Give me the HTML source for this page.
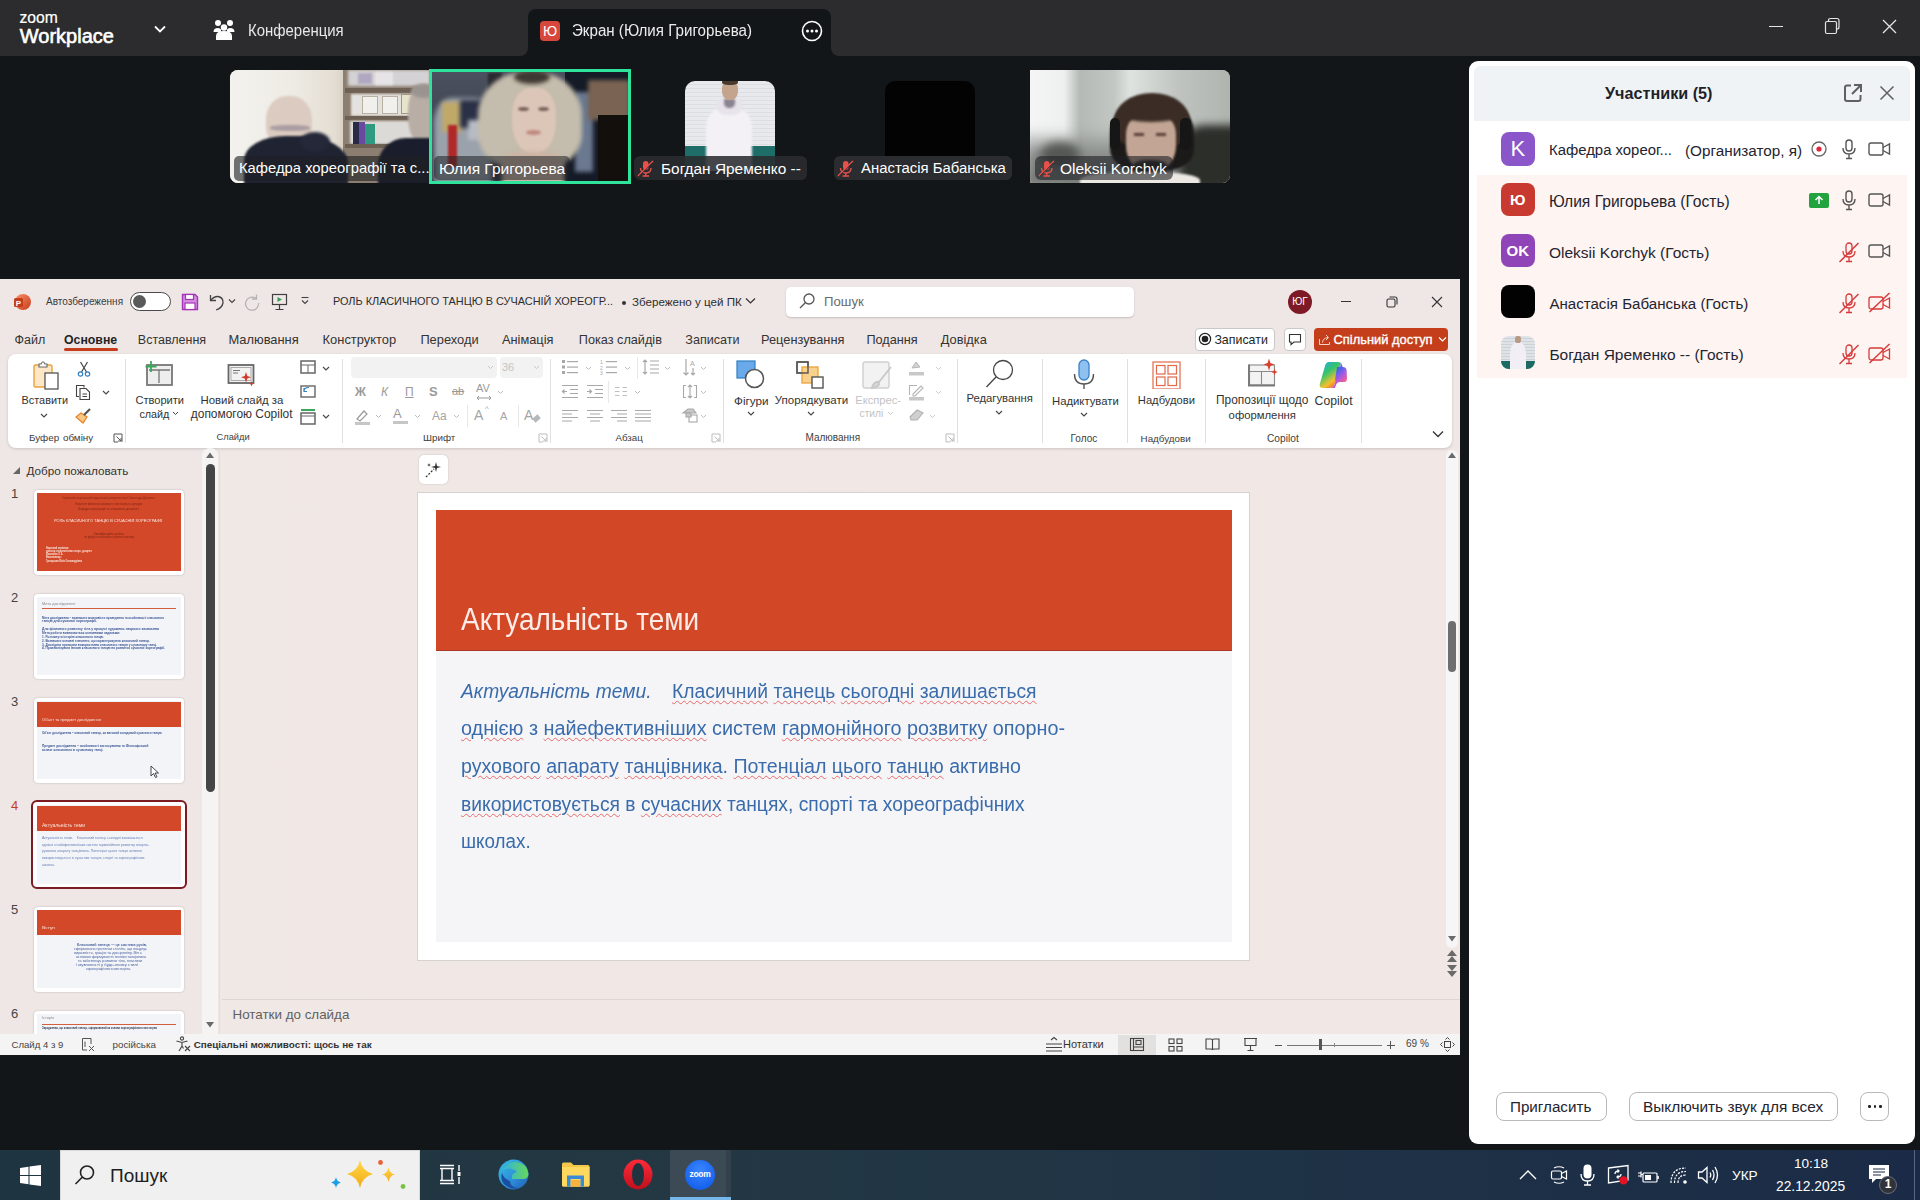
<!DOCTYPE html>
<html><head><meta charset="utf-8">
<style>
*{margin:0;padding:0;box-sizing:border-box}
html,body{width:1920px;height:1200px;overflow:hidden;background:#131619;font-family:"Liberation Sans",sans-serif}
.a{position:absolute}
.t{position:absolute;white-space:nowrap;line-height:1;transform-origin:0 0}
#top{left:0;top:0;width:1920px;height:56px;background:#2c2c2e}
#tab{left:528px;top:9px;width:303px;height:47px;background:#131619;border-radius:8px 8px 0 0}
</style></head><body>
<!-- ZOOM TOP BAR -->
<div id="top" class="a"></div>
<div class="a" style="left:520px;top:48px;width:8px;height:8px;background:#131619"></div>
<div class="a" style="left:520px;top:40px;width:8px;height:16px;background:#2c2c2e;border-radius:0 0 8px 0"></div>
<div class="a" style="left:831px;top:48px;width:8px;height:8px;background:#131619"></div>
<div class="a" style="left:831px;top:40px;width:8px;height:16px;background:#2c2c2e;border-radius:0 0 0 8px"></div>
<div id="tab" class="a"></div>
<div class="t" style="left:19.5px;top:9.5px;font-size:15.7px;color:#fff;-webkit-text-stroke:0.2px #fff">zoom</div>
<div class="t" style="left:19.8px;top:25.7px;font-size:20px;color:#fff;-webkit-text-stroke:0.6px #fff">Workplace</div>
<svg class="a" style="left:153px;top:24px" width="14" height="10" viewBox="0 0 14 10"><path d="M2 2.5 L7 7.5 L12 2.5" stroke="#fff" stroke-width="1.8" fill="none"/></svg>
<svg class="a" style="left:213px;top:19px" width="22" height="22" viewBox="0 0 22 22" fill="#fff"><circle cx="5" cy="4" r="3"/><circle cx="17" cy="4" r="3"/><circle cx="11" cy="8.5" r="3.2"/><path d="M0.5 13 Q0.5 9 5 9 Q7 9 8 10.5 L8 13Z"/><path d="M21.5 13 Q21.5 9 17 9 Q15 9 14 10.5 L14 13Z"/><path d="M3 21 L3 17 Q3 12 11 12 Q19 12 19 17 L19 21 Z"/></svg>
<div class="t" style="left:247.5px;top:23.1px;font-size:15.78px;transform:scaleX(0.947);color:#e8e8e8">Конференция</div>
<div class="a" style="left:540px;top:21px;width:20px;height:20px;background:#d8473b;border-radius:4px;color:#fff;font-size:14px;text-align:center;line-height:20px">Ю</div>
<div class="t" style="left:572px;top:22.5px;font-size:15.6px;transform:scaleX(0.97);color:#ececec">Экран (Юлия Григорьева)</div>
<svg class="a" style="left:801px;top:20px" width="22" height="22" viewBox="0 0 22 22"><circle cx="11" cy="11" r="9.5" stroke="#fff" stroke-width="1.6" fill="none"/><circle cx="6.5" cy="11" r="1.5" fill="#fff"/><circle cx="11" cy="11" r="1.5" fill="#fff"/><circle cx="15.5" cy="11" r="1.5" fill="#fff"/></svg>
<div class="a" style="left:1769px;top:25.5px;width:14px;height:1.3px;background:#e4e4e4"></div>
<svg class="a" style="left:1823px;top:16px" width="20" height="20" viewBox="0 0 20 20" fill="none" stroke="#e4e4e4" stroke-width="1.2"><rect x="2.5" y="5.5" width="11" height="12" rx="1.5"/><path d="M5.5 5.5 V4.5 Q5.5 2.5 7.5 2.5 H14 Q16 2.5 16 4.5 V11 Q16 13 14 13 H13.5"/></svg>
<svg class="a" style="left:1881px;top:18px" width="17" height="17" viewBox="0 0 17 17" stroke="#e4e4e4" stroke-width="1.3"><path d="M2 2 L15 15 M15 2 L2 15"/></svg>

<!-- VIDEO STRIP -->
<div class="a" style="left:230px;top:70px;width:200px;height:113px;overflow:hidden;border-radius:8px 0 0 8px;background:#e6e2da">
  <div class="a" style="left:0;top:0;width:116px;height:113px;background:linear-gradient(90deg,#f3f2ee,#eeebe4 55%,#e4ddd2 90%,#d8cfc2)"></div>
  <div class="a" style="left:113px;top:0;width:87px;height:113px;background:#8c7e70"></div>
  <div class="a" style="left:118px;top:0;width:82px;height:16px;background:#d4d2d4;filter:blur(1.5px)"></div>
  <div class="a" style="left:128px;top:3px;width:14px;height:11px;background:#b0a8c0;filter:blur(1px)"></div>
  <div class="a" style="left:145px;top:2px;width:18px;height:13px;background:#e6e4e6;filter:blur(1px)"></div>
  <div class="a" style="left:115px;top:18px;width:85px;height:5px;background:#6e6052;filter:blur(.5px)"></div>
  <div class="a" style="left:121px;top:24px;width:79px;height:22px;background:#e4e2de;filter:blur(1px)"></div>
  <div class="a" style="left:132px;top:26px;width:16px;height:18px;background:#f2f0ec;border:1px solid #b8b0a0;filter:blur(.6px)"></div>
  <div class="a" style="left:152px;top:26px;width:16px;height:18px;background:#f2f0ec;border:1px solid #b8b0a0;filter:blur(.6px)"></div>
  <div class="a" style="left:171px;top:24px;width:16px;height:20px;background:#e8e4cc;border:1px solid #a09880;filter:blur(.6px)"></div>
  <div class="a" style="left:115px;top:46px;width:85px;height:4px;background:#6e6052;filter:blur(.5px)"></div>
  <div class="a" style="left:120px;top:51px;width:80px;height:23px;background:#dcdad6;filter:blur(1px)"></div>
  <div class="a" style="left:123px;top:52px;width:6px;height:22px;background:#2a2a48;filter:blur(.6px)"></div>
  <div class="a" style="left:129px;top:52px;width:6px;height:22px;background:#6a4aa0;filter:blur(.6px)"></div>
  <div class="a" style="left:135px;top:54px;width:10px;height:20px;background:#2e9a80;filter:blur(.6px)"></div>
  <div class="a" style="left:115px;top:74px;width:85px;height:4px;background:#6e6052;filter:blur(.5px)"></div>
  <div class="a" style="left:36px;top:26px;width:46px;height:52px;background:#dccbc0;border-radius:45% 45% 42% 42%;filter:blur(1.2px)"></div>
  <div class="a" style="left:40px;top:55px;width:40px;height:6px;background:#8a8090;border-radius:40%;filter:blur(1px);opacity:.6"></div>
  <div class="a" style="left:14px;top:66px;width:104px;height:60px;background:#1f2332;border-radius:40% 45% 0 0;filter:blur(1.2px)"></div>
  <div class="a" style="left:70px;top:62px;width:30px;height:20px;background:#242838;border-radius:50%;filter:blur(1.5px)"></div>
  <div class="a" style="left:178px;top:14px;width:30px;height:60px;background:#b8aea6;border-radius:45%;filter:blur(1.2px)"></div>
  <div class="a" style="left:181px;top:14px;width:26px;height:14px;background:#9a9490;border-radius:50%;filter:blur(1.5px)"></div>
  <div class="a" style="left:148px;top:68px;width:62px;height:60px;background:#1a1e2c;border-radius:45% 0 0 0;filter:blur(1.2px)"></div>
</div>
<div class="a" style="left:430px;top:70px;width:200px;height:113px;overflow:hidden;background:#1b222e">
  <div class="a" style="left:0;top:0;width:150px;height:113px;background:linear-gradient(180deg,#4b515e,#3d4452 60%,#2c3340)"></div>
  <div class="a" style="left:58px;top:3px;width:14px;height:18px;background:#2a2a30;filter:blur(1px)"></div>
  <div class="a" style="left:135px;top:0;width:65px;height:113px;background:#141a26"></div>
  <div class="a" style="left:145px;top:22px;width:18px;height:80px;background:#6a7890;filter:blur(2px)"></div>
  <div class="a" style="left:158px;top:10px;width:42px;height:40px;background:#7a6352;filter:blur(2px)"></div>
  <div class="a" style="left:168px;top:45px;width:32px;height:68px;background:#120f0c"></div>
  <div class="a" style="left:4px;top:28px;width:58px;height:85px;background:#9aa2ac;border-radius:30% 30% 0 0;filter:blur(2.5px)"></div>
  <div class="a" style="left:12px;top:32px;width:20px;height:30px;background:#c0a868;filter:blur(2px)"></div>
  <div class="a" style="left:18px;top:55px;width:9px;height:42px;background:#b02828;filter:blur(1px)"></div>
  <div class="a" style="left:30px;top:30px;width:28px;height:28px;background:#2a3045;filter:blur(2px)"></div>
  <div class="a" style="left:38px;top:50px;width:22px;height:20px;background:#b8bcc4;filter:blur(2px)"></div>
  <div class="a" style="left:48px;top:2px;width:104px;height:96px;background:#c4bcac;border-radius:45% 45% 35% 35%;filter:blur(2px)"></div>
  <div class="a" style="left:84px;top:0;width:36px;height:14px;background:#3e3832;border-radius:50%;filter:blur(2px)"></div>
  <div class="a" style="left:82px;top:18px;width:44px;height:66px;background:#dcc6b8;border-radius:40% 40% 48% 48%;filter:blur(1.2px)"></div>
  <div class="a" style="left:88px;top:37px;width:11px;height:4px;background:#7a625a;border-radius:50%;filter:blur(1.2px)"></div>
  <div class="a" style="left:108px;top:37px;width:11px;height:4px;background:#7a625a;border-radius:50%;filter:blur(1.2px)"></div>
  <div class="a" style="left:96px;top:60px;width:15px;height:5px;background:#c08a80;border-radius:50%;filter:blur(.8px)"></div>
  <div class="a" style="left:72px;top:82px;width:62px;height:40px;background:#cdb4a4;border-radius:30% 30% 0 0;filter:blur(2px)"></div>
</div>
<div class="a" style="left:429px;top:69px;width:202px;height:115px;border:3px solid #2fe39c"></div>
<div class="a" style="left:685px;top:81px;width:90px;height:90px;border-radius:10px;overflow:hidden;background:repeating-linear-gradient(180deg,#e8e9ec 0 3px,#dcdee2 3px 4px)">
  <div class="a" style="left:0;top:65px;width:90px;height:25px;background:#1e6d69"></div>
  <div class="a" style="left:21px;top:28px;width:46px;height:65px;background:#f3f1f6;border-radius:30% 30% 0 0;filter:blur(0.8px)"></div><div class="a" style="left:32px;top:16px;width:25px;height:18px;background:#e6e3ea;border-radius:40%;filter:blur(0.8px)"></div><div class="a" style="left:39px;top:18px;width:11px;height:9px;background:#8a8490;border-radius:0 0 50% 50%;filter:blur(0.8px)"></div>
  <div class="a" style="left:37px;top:0px;width:16px;height:19px;background:#c5a48e;border-radius:40% 40% 45% 45%;filter:blur(.7px)"></div>
  <div class="a" style="left:37px;top:-2px;width:16px;height:6px;background:#4a3a2e;border-radius:40%;filter:blur(.7px)"></div>
</div>
<div class="a" style="left:885px;top:81px;width:90px;height:90px;border-radius:10px;background:#030303"></div>
<div class="a" style="left:1030px;top:70px;width:200px;height:113px;overflow:hidden;border-radius:0 8px 8px 0;background:#b9bdb9">
  <div class="a" style="left:0;top:0;width:200px;height:113px;background:linear-gradient(90deg,#f4f5f4 0,#eef0ef 17%,#b4b9b6 25%,#c2c7c3 42%,#dfe3e0 50%,#d2d6d2 60%,#bfc3bf 75%,#b0b4af 100%)"></div>
  <div class="a" style="left:-5px;top:58px;width:210px;height:60px;background:linear-gradient(180deg,rgba(130,135,132,0),#8a8e8b 45%,#707470);filter:blur(4px)"></div>
  <div class="a" style="left:10px;top:72px;width:40px;height:25px;background:#545854;border-radius:50%;filter:blur(5px)"></div>
  <div class="a" style="left:150px;top:55px;width:60px;height:65px;background:#2c2e2a;border-radius:40% 0 0 0;filter:blur(4px)"></div>
  <div class="a" style="left:80px;top:28px;width:84px;height:72px;background:#1c1a18;border-radius:48% 48% 30% 30%;filter:blur(1px)"></div>
  <div class="a" style="left:84px;top:23px;width:76px;height:55px;background:#3b2d25;border-radius:50% 50% 35% 35%;filter:blur(1.2px)"></div>
  <div class="a" style="left:96px;top:44px;width:50px;height:58px;background:#c3a595;border-radius:35% 35% 45% 45%;filter:blur(1px)"></div>
  <div class="a" style="left:94px;top:40px;width:54px;height:12px;background:#3b2d25;border-radius:40% 40% 50% 50%;filter:blur(1.5px)"></div>
  <div class="a" style="left:104px;top:63px;width:10px;height:3px;background:#5a4038;filter:blur(.8px)"></div>
  <div class="a" style="left:126px;top:63px;width:10px;height:3px;background:#5a4038;filter:blur(.8px)"></div>
  <div class="a" style="left:80px;top:48px;width:10px;height:32px;background:#161616;border-radius:5px;filter:blur(.6px)"></div>
  <div class="a" style="left:150px;top:48px;width:11px;height:32px;background:#161616;border-radius:5px;filter:blur(.6px)"></div>
  <div class="a" style="left:103px;top:90px;width:34px;height:14px;background:#2a2624;border-radius:40%;filter:blur(1.5px)"></div>
  <div class="a" style="left:50px;top:102px;width:120px;height:20px;background:#ece8e4;border-radius:40% 40% 0 0;filter:blur(1px)"></div>
</div>
<!-- labels -->
<div class="a" style="left:234px;top:156px;width:194px;height:25px;background:rgba(30,32,36,.62);border-radius:5px"></div>
<div class="t" style="left:239px;top:161px;font-size:14.8px;color:#fff">Кафедра хореографії та с...</div>
<div class="a" style="left:434px;top:156px;width:136px;height:24px;background:rgba(30,32,36,.55);border-radius:5px"></div>
<div class="t" style="left:439px;top:161px;font-size:15.5px;color:#fff">Юлия Григорьева</div>
<div class="a" style="left:634px;top:156px;width:173px;height:24px;background:rgba(43,44,48,.88);border-radius:6px"></div>
<div class="t" style="left:661px;top:161px;font-size:15.4px;color:#fff">Богдан Яременко --</div>
<div class="a" style="left:834px;top:156px;width:178px;height:24px;background:#2b2c30;border-radius:6px"></div>
<div class="t" style="left:861px;top:161px;font-size:14.9px;color:#fff">Анастасія Бабанська</div>
<div class="a" style="left:1035px;top:156px;width:138px;height:24px;background:rgba(30,32,36,.6);border-radius:6px"></div>
<div class="t" style="left:1060px;top:161px;font-size:15.5px;color:#fff">Oleksii Korchyk</div>
<svg class="a" style="left:637px;top:160px" width="17" height="17" viewBox="0 0 17 17"><rect x="6" y="1" width="5.5" height="9" rx="2.75" fill="#e8504a"/><path d="M3.5 8 Q3.5 13 8.75 13 Q14 13 14 8" stroke="#e8504a" stroke-width="1.4" fill="none"/><path d="M8.75 13 V16 M5.5 16 H12" stroke="#e8504a" stroke-width="1.4"/><path d="M1 16 L16 1" stroke="#e8504a" stroke-width="1.6"/><path d="M2.4 16 L16 2.4" stroke="#2b2c30" stroke-width="1"/></svg>
<svg class="a" style="left:837px;top:160px" width="17" height="17" viewBox="0 0 17 17"><rect x="6" y="1" width="5.5" height="9" rx="2.75" fill="#e8504a"/><path d="M3.5 8 Q3.5 13 8.75 13 Q14 13 14 8" stroke="#e8504a" stroke-width="1.4" fill="none"/><path d="M8.75 13 V16 M5.5 16 H12" stroke="#e8504a" stroke-width="1.4"/><path d="M1 16 L16 1" stroke="#e8504a" stroke-width="1.6"/><path d="M2.4 16 L16 2.4" stroke="#2b2c30" stroke-width="1"/></svg>
<svg class="a" style="left:1038px;top:160px" width="17" height="17" viewBox="0 0 17 17"><rect x="6" y="1" width="5.5" height="9" rx="2.75" fill="#e8504a"/><path d="M3.5 8 Q3.5 13 8.75 13 Q14 13 14 8" stroke="#e8504a" stroke-width="1.4" fill="none"/><path d="M8.75 13 V16 M5.5 16 H12" stroke="#e8504a" stroke-width="1.4"/><path d="M1 16 L16 1" stroke="#e8504a" stroke-width="1.6"/><path d="M2.4 16 L16 2.4" stroke="#2b2c30" stroke-width="1"/></svg>
<!-- POWERPOINT WINDOW -->
<div class="a" style="left:0;top:279px;width:1460px;height:776px;background:#efe7e5"></div>
<div class="a" style="left:220px;top:448px;width:1240px;height:586px;background:linear-gradient(90deg,#f0e8e5,#f1e7e5)"></div>
<!-- title bar -->
<svg class="a" style="left:13px;top:293px" width="18" height="18" viewBox="0 0 18 18"><defs><linearGradient id="pg" x1="0" y1="0" x2="1" y2="1"><stop offset="0" stop-color="#ff8f6b"/><stop offset="1" stop-color="#c43e1c"/></linearGradient></defs><circle cx="10" cy="9" r="8" fill="url(#pg)"/><rect x="1" y="5" width="9" height="9" rx="1.5" fill="#c43e1c"/><text x="5.5" y="12.5" font-size="8" font-weight="bold" fill="#fff" text-anchor="middle" font-family="Liberation Sans">P</text></svg>
<div class="t" style="left:46px;top:297px;font-size:10px;color:#3b3b3b">Автозбереження</div>
<div class="a" style="left:130px;top:292px;width:41px;height:19px;border:1px solid #4a4a4a;border-radius:10px;background:#fff"></div>
<div class="a" style="left:133px;top:295px;width:13px;height:13px;border-radius:50%;background:#5a5a5a"></div>
<svg class="a" style="left:181px;top:293px" width="18" height="18" viewBox="0 0 18 18"><path d="M1.5 1.5 H14 L16.5 4 V16.5 H1.5Z" fill="#d58ee0" stroke="#a235b8" stroke-width="1.4"/><rect x="4.5" y="1.5" width="8" height="5" fill="#fff" stroke="#a235b8" stroke-width="1.2"/><rect x="4" y="10" width="10" height="6.5" fill="#fff" stroke="#a235b8" stroke-width="1.2"/></svg>
<svg class="a" style="left:208px;top:293px" width="18" height="18" viewBox="0 0 18 18" fill="none" stroke="#444" stroke-width="1.3"><path d="M2.5 2 V7.5 H8"/><path d="M2.8 7.3 Q6 3.2 10 3.5 Q15.5 4.5 15 10 Q14 15 8 17"/></svg>
<svg class="a" style="left:228px;top:297px" width="8" height="8" viewBox="0 0 8 8" fill="none" stroke="#444" stroke-width="1.1"><path d="M1 2.5 L4 5.5 L7 2.5"/></svg>
<svg class="a" style="left:243px;top:293px" width="18" height="18" viewBox="0 0 18 18" fill="none" stroke="#b5b5b5" stroke-width="1.3"><path d="M13.5 1.5 V6 H9"/><path d="M13.3 5.8 A6.5 6.5 0 1 0 15.5 10"/></svg>
<svg class="a" style="left:271px;top:293px" width="17" height="18" viewBox="0 0 17 18" fill="none" stroke="#404040" stroke-width="1.2"><rect x="1.5" y="1.5" width="14" height="10"/><path d="M8.5 11.5 V16 M4.5 16.5 H12.5"/><path d="M6.5 4 L11 6.5 L6.5 9Z" fill="#2e9e5a" stroke="none"/></svg>
<svg class="a" style="left:300px;top:296px" width="10" height="10" viewBox="0 0 10 10" fill="none" stroke="#444" stroke-width="1.1"><path d="M1.5 1.5 H8.5"/><path d="M2 4.5 L5 7.5 L8 4.5"/></svg>
<div class="t" style="left:333px;top:296px;font-size:10.9px;color:#2d2d2d">РОЛЬ КЛАСИЧНОГО ТАНЦЮ В СУЧАСНІЙ ХОРЕОГР...</div>
<div class="a" style="left:622px;top:301px;width:4px;height:4px;border-radius:50%;background:#333"></div>
<div class="t" style="left:632px;top:296px;font-size:11.6px;color:#2d2d2d">Збережено у цей ПК</div>
<svg class="a" style="left:745px;top:297px" width="11" height="8" viewBox="0 0 11 8" fill="none" stroke="#333" stroke-width="1.2"><path d="M1 1.5 L5.5 6 L10 1.5"/></svg>
<div class="a" style="left:786px;top:287px;width:348px;height:30px;background:#fff;border-radius:5px;box-shadow:0 1px 2px rgba(0,0,0,.18)"></div>
<svg class="a" style="left:798px;top:292px" width="18" height="18" viewBox="0 0 18 18" fill="none" stroke="#555" stroke-width="1.3"><circle cx="11" cy="7" r="5"/><path d="M7.3 10.7 L2 16"/></svg>
<div class="t" style="left:824px;top:295px;font-size:13.2px;color:#6b6b6b">Пошук</div>
<div class="a" style="left:1288px;top:290px;width:24px;height:24px;border-radius:50%;background:#7d1a25;color:#fff;font-size:10px;line-height:24px;text-align:center">ЮГ</div>
<div class="a" style="left:1341px;top:301px;width:10px;height:1.2px;background:#333"></div>
<svg class="a" style="left:1386px;top:296px" width="12" height="12" viewBox="0 0 12 12" fill="none" stroke="#333" stroke-width="1.1"><rect x="1" y="3" width="8" height="8" rx="1.5"/><path d="M3.5 1 H9 Q11 1 11 3 V8.5"/></svg>
<svg class="a" style="left:1431px;top:296px" width="12" height="12" viewBox="0 0 12 12" stroke="#333" stroke-width="1.1"><path d="M1 1 L11 11 M11 1 L1 11"/></svg>
<!-- tabs -->
<div class="t" style="left:14.6px;top:334px;font-size:12.5px;color:#333">Файл</div>
<div class="t" style="left:64px;top:334px;font-size:12.3px;font-weight:bold;color:#242424">Основне</div>
<div class="a" style="left:64px;top:348px;width:54px;height:3px;border-radius:2px;background:#c43e1c"></div>
<div class="t" style="left:137.8px;top:334px;font-size:12.5px;color:#333">Вставлення</div>
<div class="t" style="left:228.4px;top:334px;font-size:12.9px;color:#333">Малювання</div>
<div class="t" style="left:322.6px;top:334px;font-size:12.9px;color:#333">Конструктор</div>
<div class="t" style="left:420.4px;top:334px;font-size:12.85px;color:#333">Переходи</div>
<div class="t" style="left:502px;top:334px;font-size:12.8px;color:#333">Анімація</div>
<div class="t" style="left:578.8px;top:334px;font-size:12.7px;color:#333">Показ слайдів</div>
<div class="t" style="left:685.3px;top:334px;font-size:12.6px;color:#333">Записати</div>
<div class="t" style="left:761px;top:334px;font-size:12.8px;color:#333">Рецензування</div>
<div class="t" style="left:866.4px;top:334px;font-size:12.7px;color:#333">Подання</div>
<div class="t" style="left:940.8px;top:334px;font-size:12.8px;color:#333">Довідка</div>
<div class="a" style="left:1195px;top:328px;width:80px;height:23px;border:1px solid #c9c9c9;border-radius:4px;background:#fff"></div>
<svg class="a" style="left:1198px;top:332px" width="14" height="14" viewBox="0 0 14 14"><circle cx="7" cy="7" r="5.6" fill="none" stroke="#222" stroke-width="1.2"/><circle cx="7" cy="7" r="3.3" fill="#222"/></svg>
<div class="t" style="left:1214.4px;top:334px;font-size:12.4px;color:#242424">Записати</div>
<div class="a" style="left:1284px;top:328px;width:22px;height:23px;border:1px solid #c9c9c9;border-radius:4px;background:#fff"></div>
<svg class="a" style="left:1288px;top:333px" width="14" height="13" viewBox="0 0 14 13" fill="none" stroke="#333" stroke-width="1.1"><path d="M1.5 1.5 H12.5 V9 H6 L3 11.5 V9 H1.5Z"/></svg>
<div class="a" style="left:1314px;top:328px;width:134px;height:23px;border-radius:4px;background:#c43e1c"></div>
<svg class="a" style="left:1318px;top:333px" width="14" height="13" viewBox="0 0 14 13" fill="none" stroke="#f6d2c6" stroke-width="1"><path d="M1.5 6 V11.5 H11.5 V9"/><path d="M4.5 9.5 Q5 5 10 4.5 M8 2 L10.5 4.5 L8 7"/></svg>
<div class="t" style="left:1333.5px;top:333.5px;font-size:12.9px;color:#fff;-webkit-text-stroke:0.35px #fff">Спільний доступ</div>
<svg class="a" style="left:1438px;top:336px" width="9" height="7" viewBox="0 0 9 7" fill="none" stroke="#fff" stroke-width="1.2"><path d="M1 1.5 L4.5 5 L8 1.5"/></svg>
<!-- RIBBON -->
<div class="a" style="left:8px;top:354px;width:1444px;height:94px;background:#fff;border-radius:8px;box-shadow:0 1px 3px rgba(0,0,0,.16)"></div>
<!-- separators -->
<div class="a" style="left:125px;top:359px;width:1px;height:84px;background:#e1dfdd"></div>
<div class="a" style="left:342px;top:359px;width:1px;height:84px;background:#e1dfdd"></div>
<div class="a" style="left:550px;top:359px;width:1px;height:84px;background:#e1dfdd"></div>
<div class="a" style="left:723px;top:359px;width:1px;height:84px;background:#e1dfdd"></div>
<div class="a" style="left:957px;top:359px;width:1px;height:84px;background:#e1dfdd"></div>
<div class="a" style="left:1042px;top:359px;width:1px;height:84px;background:#e1dfdd"></div>
<div class="a" style="left:1127px;top:359px;width:1px;height:84px;background:#e1dfdd"></div>
<div class="a" style="left:1205px;top:359px;width:1px;height:84px;background:#e1dfdd"></div>
<div class="a" style="left:1361px;top:359px;width:1px;height:84px;background:#e1dfdd"></div>
<!-- group labels -->
<div class="t" style="left:29px;top:433px;font-size:9.9px;color:#3d3d3d;word-spacing:1px">Буфер обміну</div>
<div class="t" style="left:216.5px;top:433px;font-size:9.3px;color:#3d3d3d">Слайди</div>
<div class="t" style="left:423px;top:433px;font-size:9.8px;color:#3d3d3d">Шрифт</div>
<div class="t" style="left:615.5px;top:433px;font-size:9.7px;color:#3d3d3d">Абзац</div>
<div class="t" style="left:805.5px;top:433px;font-size:10px;color:#3d3d3d">Малювання</div>
<div class="t" style="left:1070.6px;top:434px;font-size:10px;color:#3d3d3d">Голос</div>
<div class="t" style="left:1140.6px;top:434px;font-size:9.8px;color:#3d3d3d">Надбудови</div>
<div class="t" style="left:1267px;top:434px;font-size:10.2px;color:#3d3d3d">Copilot</div>
<!-- launchers -->
<svg class="a" style="left:113px;top:433px" width="10" height="10" viewBox="0 0 10 10" fill="none" stroke="#555" stroke-width="1"><path d="M1 1 H9 V9 M1 1 V9 H5 M3.5 3.5 L8 8 M8 5 V8 H5"/></svg>
<svg class="a" style="left:538px;top:433px" width="10" height="10" viewBox="0 0 10 10" fill="none" stroke="#bdbdbd" stroke-width="1"><path d="M1 1 H9 V9 M1 1 V9 H5 M3.5 3.5 L8 8 M8 5 V8 H5"/></svg>
<svg class="a" style="left:711px;top:433px" width="10" height="10" viewBox="0 0 10 10" fill="none" stroke="#bdbdbd" stroke-width="1"><path d="M1 1 H9 V9 M1 1 V9 H5 M3.5 3.5 L8 8 M8 5 V8 H5"/></svg>
<svg class="a" style="left:945px;top:433px" width="10" height="10" viewBox="0 0 10 10" fill="none" stroke="#bdbdbd" stroke-width="1"><path d="M1 1 H9 V9 M1 1 V9 H5 M3.5 3.5 L8 8 M8 5 V8 H5"/></svg>
<svg class="a" style="left:1432px;top:430px" width="12" height="8" viewBox="0 0 12 8" fill="none" stroke="#333" stroke-width="1.3"><path d="M1 1.5 L6 6.5 L11 1.5"/></svg>

<!-- Clipboard -->
<svg class="a" style="left:32px;top:361px" width="30" height="30" viewBox="0 0 30 30"><rect x="2" y="4" width="18" height="22" rx="1.5" fill="#fde7c6" stroke="#e8a33c" stroke-width="1.4"/><path d="M7 3 H9 Q10 0.8 11 0.8 Q12 0.8 13 3 H15 V6 H7Z" fill="#fff" stroke="#666" stroke-width="1.1"/><rect x="13" y="12" width="13" height="16" fill="#fff" stroke="#555" stroke-width="1.3"/></svg>
<div class="t" style="left:21.5px;top:395px;font-size:10.9px;color:#333333">Вставити</div>
<svg class="a" style="left:40px;top:413px" width="8" height="6" viewBox="0 0 8 6" fill="none" stroke="#444" stroke-width="1.1"><path d="M1 1 L4 4 L7 1"/></svg>
<svg class="a" style="left:77px;top:361px" width="14" height="16" viewBox="0 0 14 16" fill="none" stroke-width="1.2"><path d="M3.5 1 L9.5 11 M10.5 1 L4.5 11" stroke="#444"/><circle cx="3.5" cy="13" r="2.2" stroke="#2f7fc1"/><circle cx="10.5" cy="13" r="2.2" stroke="#2f7fc1"/></svg>
<svg class="a" style="left:75px;top:384px" width="16" height="17" viewBox="0 0 16 17" fill="none" stroke="#444" stroke-width="1.1"><path d="M4 12.5 H1.5 V1.5 H9 V3.5"/><path d="M5 4.5 H11 L14.5 8 V15.5 H5Z"/><path d="M7.5 10 H12 M7.5 12.5 H12"/></svg>
<svg class="a" style="left:102px;top:390px" width="8" height="6" viewBox="0 0 8 6" fill="none" stroke="#444" stroke-width="1.1"><path d="M1 1 L4 4 L7 1"/></svg>
<svg class="a" style="left:75px;top:408px" width="18" height="16" viewBox="0 0 18 16"><path d="M1 9 L8 15 L12 9 L6 5Z" fill="#f9c884" stroke="#e8862a" stroke-width="1.3"/><path d="M9 7 L15 1" stroke="#555" stroke-width="2.2"/></svg>

<!-- Slides group -->
<svg class="a" style="left:144px;top:360px" width="30" height="27" viewBox="0 0 30 27"><rect x="3" y="5" width="25" height="20" fill="#eee" stroke="#777" stroke-width="1.8"/><path d="M5 10 H26 M15 10 V23" stroke="#777" stroke-width="1.3"/><path d="M7 1 V12 M1.5 6.5 H12.5" stroke="#3aa85a" stroke-width="1.8"/></svg>
<div class="t" style="left:135.4px;top:395px;font-size:11.1px;color:#333333">Створити</div>
<div class="t" style="left:139.4px;top:409px;font-size:10.8px;color:#333333">слайд</div>
<svg class="a" style="left:172px;top:411px" width="7" height="5" viewBox="0 0 7 5" fill="none" stroke="#444" stroke-width="1"><path d="M1 1 L3.5 3.5 L6 1"/></svg>
<svg class="a" style="left:227px;top:363px" width="30" height="25" viewBox="0 0 30 25"><rect x="1.5" y="2" width="25" height="18" fill="#f2f2f2" stroke="#666" stroke-width="1.8"/><rect x="4" y="4.5" width="20" height="13" fill="none" stroke="#999" stroke-width="0.8"/><path d="M6 7.5 H13 M6 10 H11" stroke="#777" stroke-width="1"/><path d="M19 9 L20.3 13 L24 14.3 L20.3 15.6 L19 19.5 L17.7 15.6 L14 14.3 L17.7 13Z" fill="#d13b2b"/><path d="M24.5 18 L25.2 20 L27 20.7 L25.2 21.4 L24.5 23.5 L23.8 21.4 L22 20.7 L23.8 20Z" fill="#d13b2b"/></svg>
<div class="t" style="left:200.5px;top:395px;font-size:11.4px;color:#333333">Новий слайд за</div>
<div class="t" style="left:190.8px;top:409px;font-size:11.95px;color:#333333">допомогою Copilot</div>
<svg class="a" style="left:300px;top:360px" width="17" height="15" viewBox="0 0 17 15" fill="none" stroke="#666" stroke-width="1.5"><rect x="1" y="1" width="14" height="12"/><path d="M1 5 H15 M8 5 V13" stroke-width="1"/></svg>
<svg class="a" style="left:322px;top:366px" width="8" height="6" viewBox="0 0 8 6" fill="none" stroke="#444" stroke-width="1.1"><path d="M1 1 L4 4 L7 1"/></svg>
<svg class="a" style="left:300px;top:384px" width="17" height="15" viewBox="0 0 17 15" fill="none" stroke-width="1.4"><rect x="1" y="2" width="14" height="11" stroke="#666"/><path d="M4 7 Q4 3.5 9 3.5 M4 4 L4 7.5 L7 7.5" stroke="#2f7fc1" stroke-width="1.2"/></svg>
<svg class="a" style="left:300px;top:408px" width="17" height="17" viewBox="0 0 17 17" fill="none" stroke-width="1.5"><path d="M1 2 H15" stroke="#3aa85a" stroke-width="2"/><rect x="1" y="5" width="14" height="11" stroke="#666"/><path d="M1 8 H15" stroke="#666" stroke-width="1"/></svg>
<svg class="a" style="left:322px;top:414px" width="8" height="6" viewBox="0 0 8 6" fill="none" stroke="#444" stroke-width="1.1"><path d="M1 1 L4 4 L7 1"/></svg>

<!-- Font group (disabled) -->
<div class="a" style="left:351px;top:357px;width:146px;height:21px;background:#f2f2f2;border-radius:4px"></div>
<svg class="a" style="left:487px;top:365px" width="7" height="5" viewBox="0 0 7 5" fill="none" stroke="#c8c8c8" stroke-width="1"><path d="M1 1 L3.5 3.5 L6 1"/></svg>
<div class="a" style="left:500px;top:357px;width:43px;height:21px;background:#f2f2f2;border-radius:4px"></div>
<div class="t" style="left:502px;top:362px;font-size:11px;color:#c4c4c4">36</div>
<svg class="a" style="left:533px;top:365px" width="7" height="5" viewBox="0 0 7 5" fill="none" stroke="#c8c8c8" stroke-width="1"><path d="M1 1 L3.5 3.5 L6 1"/></svg>
<div class="t" style="left:355px;top:386px;font-size:12px;font-weight:bold;color:#9a9a9a">Ж</div>
<div class="t" style="left:381px;top:386px;font-size:12px;font-style:italic;color:#9a9a9a">К</div>
<div class="t" style="left:405px;top:386px;font-size:12px;color:#9a9a9a;text-decoration:underline">П</div>
<div class="t" style="left:429px;top:385px;font-size:13px;font-weight:bold;color:#9a9a9a">S</div>
<div class="t" style="left:452px;top:386px;font-size:11px;color:#9a9a9a;text-decoration:line-through">ab</div>
<div class="t" style="left:476px;top:383px;font-size:11px;color:#9a9a9a">AV</div>
<svg class="a" style="left:476px;top:395px" width="16" height="6" viewBox="0 0 16 6" fill="none" stroke="#9a9a9a" stroke-width="1"><path d="M1 3 H15 M3 1 L1 3 L3 5 M13 1 L15 3 L13 5"/></svg>
<svg class="a" style="left:497px;top:390px" width="7" height="5" viewBox="0 0 7 5" fill="none" stroke="#bbb" stroke-width="1"><path d="M1 1 L3.5 3.5 L6 1"/></svg>
<svg class="a" style="left:354px;top:408px" width="17" height="17" viewBox="0 0 17 17"><path d="M3 11 L10 3 L13 6 L6 13Z" fill="none" stroke="#9a9a9a" stroke-width="1.2"/><rect x="1" y="14" width="15" height="3" fill="#c6c6c6"/></svg>
<svg class="a" style="left:375px;top:414px" width="7" height="5" viewBox="0 0 7 5" fill="none" stroke="#bbb" stroke-width="1"><path d="M1 1 L3.5 3.5 L6 1"/></svg>
<div class="t" style="left:393px;top:407px;font-size:13px;color:#9a9a9a">A</div>
<div class="a" style="left:393px;top:421px;width:15px;height:3px;background:#c6c6c6"></div>
<svg class="a" style="left:414px;top:414px" width="7" height="5" viewBox="0 0 7 5" fill="none" stroke="#bbb" stroke-width="1"><path d="M1 1 L3.5 3.5 L6 1"/></svg>
<div class="t" style="left:432px;top:410px;font-size:12px;color:#a5a5a5">Aa</div>
<svg class="a" style="left:453px;top:414px" width="7" height="5" viewBox="0 0 7 5" fill="none" stroke="#bbb" stroke-width="1"><path d="M1 1 L3.5 3.5 L6 1"/></svg>
<div class="a" style="left:467px;top:405px;width:1px;height:22px;background:#e8e8e8"></div>
<div class="t" style="left:474px;top:408px;font-size:14px;color:#a5a5a5">A</div>
<div class="t" style="left:485px;top:405px;font-size:8px;color:#a5a5a5">^</div>
<div class="t" style="left:500px;top:411px;font-size:11px;color:#a5a5a5">A</div>
<div class="a" style="left:518px;top:405px;width:1px;height:22px;background:#e8e8e8"></div>
<div class="t" style="left:524px;top:408px;font-size:14px;color:#a5a5a5">A</div>
<div class="a" style="left:533px;top:416px;width:7px;height:5px;background:#b8b8b8;transform:rotate(-40deg)"></div>

<!-- Paragraph group (disabled) -->
<svg class="a" style="left:561px;top:359px" width="18" height="16" viewBox="0 0 18 16" fill="#a8a8a8"><rect x="1" y="1" width="3" height="3"/><rect x="1" y="6.5" width="3" height="3"/><rect x="1" y="12" width="3" height="3"/><rect x="6" y="2" width="11" height="1.2"/><rect x="6" y="7.5" width="11" height="1.2"/><rect x="6" y="13" width="11" height="1.2"/></svg>
<svg class="a" style="left:585px;top:366px" width="7" height="5" viewBox="0 0 7 5" fill="none" stroke="#bbb" stroke-width="1"><path d="M1 1 L3.5 3.5 L6 1"/></svg>
<svg class="a" style="left:600px;top:359px" width="18" height="16" viewBox="0 0 18 16" fill="#a8a8a8"><text x="0" y="5" font-size="5" font-family="Liberation Sans">1</text><text x="0" y="10.5" font-size="5" font-family="Liberation Sans">2</text><text x="0" y="16" font-size="5" font-family="Liberation Sans">3</text><rect x="6" y="2" width="11" height="1.2"/><rect x="6" y="7.5" width="11" height="1.2"/><rect x="6" y="13" width="11" height="1.2"/></svg>
<svg class="a" style="left:624px;top:366px" width="7" height="5" viewBox="0 0 7 5" fill="none" stroke="#bbb" stroke-width="1"><path d="M1 1 L3.5 3.5 L6 1"/></svg>
<div class="a" style="left:637px;top:357px;width:1px;height:22px;background:#e8e8e8"></div>
<svg class="a" style="left:642px;top:359px" width="18" height="16" viewBox="0 0 18 16" fill="none" stroke="#a8a8a8" stroke-width="1.2"><path d="M3 1 V15 M1 3 L3 1 L5 3 M1 13 L3 15 L5 13 M8 2 H17 M8 6 H17 M8 10 H17 M8 14 H17"/></svg>
<svg class="a" style="left:664px;top:366px" width="7" height="5" viewBox="0 0 7 5" fill="none" stroke="#bbb" stroke-width="1"><path d="M1 1 L3.5 3.5 L6 1"/></svg>
<svg class="a" style="left:682px;top:358px" width="16" height="18" viewBox="0 0 16 18" fill="none" stroke="#a8a8a8" stroke-width="1.2"><path d="M4 1 V17 M1.5 14.5 L4 17 L6.5 14.5"/><text x="8" y="8" font-size="7" fill="#a8a8a8" stroke="none" font-family="Liberation Sans">A</text><path d="M11 10 V17 M9 15 L11 17 L13 15"/></svg>
<svg class="a" style="left:700px;top:366px" width="7" height="5" viewBox="0 0 7 5" fill="none" stroke="#bbb" stroke-width="1"><path d="M1 1 L3.5 3.5 L6 1"/></svg>
<svg class="a" style="left:561px;top:384px" width="18" height="15" viewBox="0 0 18 15" fill="none" stroke="#a8a8a8" stroke-width="1.2"><path d="M1 1.5 H17 M9 5.5 H17 M9 9.5 H17 M1 13.5 H17 M6 7.5 H1.5 M3.5 5.5 L1.5 7.5 L3.5 9.5"/></svg>
<svg class="a" style="left:586px;top:384px" width="18" height="15" viewBox="0 0 18 15" fill="none" stroke="#a8a8a8" stroke-width="1.2"><path d="M1 1.5 H17 M9 5.5 H17 M9 9.5 H17 M1 13.5 H17 M1 7.5 H5.5 M3.5 5.5 L5.5 7.5 L3.5 9.5"/></svg>
<div class="a" style="left:608px;top:381px;width:1px;height:22px;background:#e8e8e8"></div>
<svg class="a" style="left:614px;top:386px" width="14" height="11" viewBox="0 0 14 11" fill="none" stroke="#c0c0c0" stroke-width="1.2"><path d="M1 1.5 H5.5 M8.5 1.5 H13 M1 5.5 H5.5 M8.5 5.5 H13 M1 9.5 H5.5 M8.5 9.5 H13"/></svg>
<svg class="a" style="left:634px;top:390px" width="7" height="5" viewBox="0 0 7 5" fill="none" stroke="#bbb" stroke-width="1"><path d="M1 1 L3.5 3.5 L6 1"/></svg>
<svg class="a" style="left:682px;top:384px" width="16" height="15" viewBox="0 0 16 15" fill="none" stroke="#a8a8a8" stroke-width="1.1"><path d="M4 1.5 H1.5 V13.5 H4 M12 1.5 H14.5 V13.5 H12 M8 1 V14 M6 3 L8 1 L10 3 M6 12 L8 14 L10 12"/></svg>
<svg class="a" style="left:700px;top:390px" width="7" height="5" viewBox="0 0 7 5" fill="none" stroke="#bbb" stroke-width="1"><path d="M1 1 L3.5 3.5 L6 1"/></svg>
<svg class="a" style="left:561px;top:409px" width="18" height="14" viewBox="0 0 18 14" fill="none" stroke="#a8a8a8" stroke-width="1.2"><path d="M1 1.5 H17 M1 5 H11 M1 8.5 H17 M1 12 H11"/></svg>
<svg class="a" style="left:586px;top:409px" width="18" height="14" viewBox="0 0 18 14" fill="none" stroke="#a8a8a8" stroke-width="1.2"><path d="M1 1.5 H17 M4 5 H14 M1 8.5 H17 M4 12 H14"/></svg>
<svg class="a" style="left:610px;top:409px" width="18" height="14" viewBox="0 0 18 14" fill="none" stroke="#a8a8a8" stroke-width="1.2"><path d="M1 1.5 H17 M7 5 H17 M1 8.5 H17 M7 12 H17"/></svg>
<svg class="a" style="left:634px;top:409px" width="18" height="14" viewBox="0 0 18 14" fill="none" stroke="#a8a8a8" stroke-width="1.2"><path d="M1 1.5 H17 M1 5 H17 M1 8.5 H17 M1 12 H17"/></svg>
<svg class="a" style="left:682px;top:408px" width="16" height="15" viewBox="0 0 16 15" fill="none" stroke="#a8a8a8" stroke-width="1.1"><path d="M1 5 L6 1 H11 L14 5Z" fill="#c8c8c8"/><rect x="7" y="7" width="8" height="7"/><rect x="4" y="5" width="5" height="4" fill="#c8c8c8"/></svg>
<svg class="a" style="left:700px;top:414px" width="7" height="5" viewBox="0 0 7 5" fill="none" stroke="#bbb" stroke-width="1"><path d="M1 1 L3.5 3.5 L6 1"/></svg>

<!-- Drawing group -->
<svg class="a" style="left:736px;top:360px" width="30" height="29" viewBox="0 0 30 29"><rect x="1" y="1" width="18" height="17" fill="#6aa9ea" stroke="#2f7fc1" stroke-width="1.2"/><circle cx="18.5" cy="18.5" r="9" fill="#fff" stroke="#555" stroke-width="1.5"/></svg>
<div class="t" style="left:734px;top:395px;font-size:11.7px;color:#333333">Фігури</div>
<svg class="a" style="left:747px;top:411px" width="8" height="6" viewBox="0 0 8 6" fill="none" stroke="#444" stroke-width="1.1"><path d="M1 1 L4 4 L7 1"/></svg>
<svg class="a" style="left:796px;top:361px" width="29" height="28" viewBox="0 0 29 28"><rect x="1" y="1" width="11" height="11" fill="#fff" stroke="#555" stroke-width="1.4"/><rect x="6" y="6" width="16" height="16" fill="#f9d18c" stroke="#e8a33c" stroke-width="1.3"/><rect x="16" y="16" width="11" height="11" fill="#fff" stroke="#555" stroke-width="1.4"/><rect x="1" y="1" width="11" height="11" fill="none" stroke="#555" stroke-width="1.4"/></svg>
<div class="t" style="left:774.8px;top:395px;font-size:11.5px;color:#333333">Упорядкувати</div>
<svg class="a" style="left:807px;top:411px" width="8" height="6" viewBox="0 0 8 6" fill="none" stroke="#444" stroke-width="1.1"><path d="M1 1 L4 4 L7 1"/></svg>
<svg class="a" style="left:862px;top:361px" width="32" height="29" viewBox="0 0 32 29"><rect x="1" y="1" width="26" height="26" rx="2" fill="#f2f2f2" stroke="#cfcfcf" stroke-width="1.4"/><path d="M29 6 L17 21 M10 27 Q12 20 17 21 Q18 26 10 27Z" stroke="#c9c9c9" stroke-width="2" fill="#d8d8d8"/></svg>
<div class="t" style="left:855.2px;top:395px;font-size:11.2px;color:#c3c3c3">Експрес-</div>
<div class="t" style="left:859.5px;top:409px;font-size:10.3px;color:#c3c3c3">стилі</div>
<svg class="a" style="left:887px;top:411px" width="7" height="5" viewBox="0 0 7 5" fill="none" stroke="#ccc" stroke-width="1"><path d="M1 1 L3.5 3.5 L6 1"/></svg>
<svg class="a" style="left:908px;top:359px" width="16" height="17" viewBox="0 0 16 17"><path d="M4 9 L8 3 L12 8 Z" fill="#d2d2d2" stroke="#b5b5b5"/><rect x="1" y="13" width="15" height="3.5" fill="#c8c8c8"/></svg>
<svg class="a" style="left:935px;top:366px" width="7" height="5" viewBox="0 0 7 5" fill="none" stroke="#ccc" stroke-width="1"><path d="M1 1 L3.5 3.5 L6 1"/></svg>
<svg class="a" style="left:908px;top:384px" width="16" height="17" viewBox="0 0 16 17" fill="none" stroke="#b5b5b5" stroke-width="1.1"><path d="M1.5 11 V1.5 H9"/><path d="M5 10 L13 2 L15 4 L7 12 H5Z"/><rect x="1" y="13" width="15" height="3.5" fill="#c8c8c8" stroke="none"/></svg>
<svg class="a" style="left:935px;top:390px" width="7" height="5" viewBox="0 0 7 5" fill="none" stroke="#ccc" stroke-width="1"><path d="M1 1 L3.5 3.5 L6 1"/></svg>
<svg class="a" style="left:908px;top:408px" width="17" height="15" viewBox="0 0 17 15"><path d="M2 9 L9 2 L15 5 L9 12 L3 12Z" fill="#d0d0d0" stroke="#b0b0b0" stroke-width="1.1"/></svg>
<svg class="a" style="left:929px;top:414px" width="7" height="5" viewBox="0 0 7 5" fill="none" stroke="#ccc" stroke-width="1"><path d="M1 1 L3.5 3.5 L6 1"/></svg>

<!-- Editing -->
<svg class="a" style="left:985px;top:359px" width="30" height="30" viewBox="0 0 30 30" fill="none" stroke="#444" stroke-width="1.3"><circle cx="18" cy="11" r="9.5"/><path d="M11 18 L1.5 28"/></svg>
<div class="t" style="left:966.4px;top:393px;font-size:11.3px;color:#333333">Редагування</div>
<svg class="a" style="left:995px;top:410px" width="8" height="6" viewBox="0 0 8 6" fill="none" stroke="#444" stroke-width="1.1"><path d="M1 1 L4 4 L7 1"/></svg>

<!-- Voice -->
<svg class="a" style="left:1073px;top:359px" width="22" height="31" viewBox="0 0 22 31"><rect x="6" y="1" width="10" height="20" rx="5" fill="#8ec0f0" stroke="#3b82c8" stroke-width="1.3"/><path d="M1.5 15 Q1.5 25 11 25 Q20.5 25 20.5 15" fill="none" stroke="#555" stroke-width="1.4"/><path d="M11 25 V30" stroke="#555" stroke-width="1.4"/></svg>
<div class="t" style="left:1052px;top:396px;font-size:11.3px;color:#333333">Надиктувати</div>
<svg class="a" style="left:1080px;top:412px" width="8" height="6" viewBox="0 0 8 6" fill="none" stroke="#444" stroke-width="1.1"><path d="M1 1 L4 4 L7 1"/></svg>

<!-- Add-ins -->
<svg class="a" style="left:1152px;top:361px" width="29" height="28" viewBox="0 0 29 28" fill="none" stroke="#e06a4a" stroke-width="1.2"><rect x="1" y="1" width="27" height="27"/><rect x="4.5" y="4.5" width="8.5" height="8.5"/><rect x="16" y="4.5" width="8.5" height="8.5"/><rect x="4.5" y="16" width="8.5" height="8.5"/><rect x="16" y="16" width="8.5" height="8.5"/></svg>
<div class="t" style="left:1137.8px;top:395px;font-size:11.2px;color:#333333">Надбудови</div>

<!-- Copilot group -->
<svg class="a" style="left:1247px;top:358px" width="32" height="29" viewBox="0 0 32 29"><rect x="2.5" y="7" width="25" height="20" fill="#f3f3f3" stroke="#8a8a8a" stroke-width="1.1"/><path d="M2 6.5 V27.5 H28" fill="none" stroke="#7a7a7a" stroke-width="2"/><path d="M2.5 13.5 H27.5 M14.5 13.5 V27" stroke="#8a8a8a" stroke-width="1.1"/><path d="M22 0.5 L23.4 5 L27.5 6.5 L23.4 8 L22 12.5 L20.6 8 L16.5 6.5 L20.6 5Z" fill="#d8402c"/><path d="M27.5 10.5 L28.3 13 L30.8 14 L28.3 15 L27.5 17.5 L26.7 15 L24.2 14 L26.7 13Z" fill="#d8402c"/></svg>
<div class="t" style="left:1216px;top:395px;font-size:11.9px;color:#333333">Пропозиції щодо</div>
<div class="t" style="left:1228.6px;top:410px;font-size:11.3px;color:#333333">оформлення</div>
<svg class="a" style="left:1318px;top:361px" width="30" height="28" viewBox="0 0 30 28"><defs><linearGradient id="cpa" x1="0" y1="0" x2="0.6" y2="1"><stop offset="0" stop-color="#1fa8f0"/><stop offset=".45" stop-color="#36c46a"/><stop offset=".8" stop-color="#f3c12e"/><stop offset="1" stop-color="#f07030"/></linearGradient><linearGradient id="cpb" x1="0.3" y1="0" x2="1" y2="1"><stop offset="0" stop-color="#2a64f0"/><stop offset=".45" stop-color="#9b59e6"/><stop offset=".8" stop-color="#e85aa8"/><stop offset="1" stop-color="#f5884a"/></linearGradient></defs><path d="M11 1 H20 Q23.5 1 22.5 4.5 L16.5 23.5 Q15.3 27 11.5 27 H5 Q1 27 1.8 23 L7 5 Q8 1 11 1Z" fill="url(#cpa)"/><path d="M19.5 1 Q23 1 24 4 L28.5 17 Q29.5 21 26 21 L22 21 Q19 21 18 24 L17 27 H11.5 Q15.3 27 16.5 23.5 L22.5 4.5 Q23.5 1 19.5 1Z" fill="url(#cpb)"/><path d="M19 6 H25 Q28 6 28.6 9 L29 16 Q29 21 25 21 H20 Q16.5 21 17.2 17.5Z" fill="url(#cpb)" opacity=".95"/></svg>
<div class="t" style="left:1314.6px;top:395px;font-size:12.2px;color:#333333">Copilot</div>
<!-- SLIDES PANE -->
<svg class="a" style="left:12px;top:466px" width="9" height="9" viewBox="0 0 9 9"><path d="M8 1 V8 H1Z" fill="#666"/></svg>
<div class="t" style="left:26.5px;top:465px;font-size:11.7px;color:#333">Добро пожаловать</div>
<div class="a" style="left:202px;top:448px;width:16px;height:586px;background:#f6f4f3;border-radius:8px 8px 0 0"></div>
<div class="a" style="left:219px;top:448px;width:1px;height:586px;background:#e2dcda"></div>
<svg class="a" style="left:205px;top:451px" width="10" height="8" viewBox="0 0 10 8"><path d="M1 7 L5 1.5 L9 7Z" fill="#6a6a6a"/></svg>
<div class="a" style="left:206px;top:464px;width:8.5px;height:328px;background:#454545;border-radius:4.5px"></div>
<svg class="a" style="left:205px;top:1021px" width="10" height="8" viewBox="0 0 10 8"><path d="M1 1 L5 6.5 L9 1Z" fill="#6a6a6a"/></svg>
<!-- numbers -->
<div class="t" style="left:11px;top:487px;font-size:13px;color:#444">1</div>
<div class="t" style="left:11px;top:591px;font-size:13px;color:#444">2</div>
<div class="t" style="left:11px;top:695px;font-size:13px;color:#444">3</div>
<div class="t" style="left:11px;top:799px;font-size:13px;color:#c43e1c">4</div>
<div class="t" style="left:11px;top:903px;font-size:13px;color:#444">5</div>
<div class="t" style="left:11px;top:1007px;font-size:13px;color:#444">6</div>
<!-- thumb 1 -->
<div class="a" style="left:34px;top:489.5px;width:150px;height:85px;background:#fff;border-radius:4px;box-shadow:0 0 2px rgba(0,0,0,.25)"></div>
<div class="a" style="left:37px;top:492.5px;width:144px;height:78px;background:#d4482a"></div>
<div class="t" style="left:62.0px;top:496.9px;font-size:3.20px;color:#7e2612;transform:scaleX(0.783)">Глухівський національний педагогічний університет імені Олександра Довженка</div>
<div class="t" style="left:75.0px;top:503.2px;font-size:3.20px;color:#7e2612;transform:scaleX(0.821)">Факультет фізичного виховання, мистецтва та культури</div>
<div class="t" style="left:78.0px;top:508.2px;font-size:3.20px;color:#7e2612;transform:scaleX(0.875)">Кафедра хореографії та спортивних дисциплін</div>
<div class="t" style="left:54.0px;top:520.2px;font-size:3.80px;color:#fbe6df;transform:scaleX(1.055)">РОЛЬ КЛАСИЧНОГО ТАНЦЮ В СУЧАСНІЙ ХОРЕОГРАФІЇ</div>
<div class="t" style="left:94.0px;top:533.1px;font-size:2.80px;color:#7e2612;transform:scaleX(1.022)">Кваліфікаційна робота</div>
<div class="t" style="left:84.0px;top:536.2px;font-size:2.80px;color:#7e2612;transform:scaleX(0.935)">на здобуття освітнього ступеня бакалавр</div>
<div class="t" style="left:46.0px;top:547.4px;font-size:2.90px;color:#fbe3da;transform:scaleX(0.820);font-weight:bold">Науковий керівник:</div>
<div class="t" style="left:46.0px;top:550.4px;font-size:2.90px;color:#fbe3da;transform:scaleX(0.950);font-weight:bold">доктор педагогічних наук, доцент</div>
<div class="t" style="left:46.0px;top:553.4px;font-size:2.90px;color:#fbe3da;transform:scaleX(0.683);font-weight:bold">Миколаєнко О. А.</div>
<div class="t" style="left:46.0px;top:556.4px;font-size:2.90px;color:#fbe3da;transform:scaleX(0.857);font-weight:bold">Виконавець:</div>
<div class="t" style="left:46.0px;top:559.9px;font-size:2.90px;color:#fbe3da;transform:scaleX(0.765);font-weight:bold">Григорьєва Юлія Олександрівна</div>
<div class="a" style="left:34px;top:593.5px;width:150px;height:85px;background:#fff;border-radius:4px;box-shadow:0 0 2px rgba(0,0,0,.25)"></div>
<div class="a" style="left:37px;top:596.5px;width:144px;height:78px;background:#f3f4f8"></div>
<div class="t" style="left:42.0px;top:602.6px;font-size:3.00px;color:#8a8a8a;transform:scaleX(1.306)">Мета дослідження</div>
<div class="a" style="left:42px;top:608.3px;width:134px;height:0.8px;background:#d06040"></div>
<div class="t" style="left:42.0px;top:616.9px;font-size:3.00px;color:#3a5594;transform:scaleX(0.982);font-weight:bold">Мета дослідження – визначити можливість проведення та особливості класичного</div>
<div class="t" style="left:42.0px;top:620.4px;font-size:3.00px;color:#3a5594;transform:scaleX(1.123);font-weight:bold">танцю для сучасної хореографії.</div>
<div class="t" style="left:42.0px;top:628.4px;font-size:3.00px;color:#3a5594;transform:scaleX(1.127);font-weight:bold">Для фізичного розвитку тіла у процесі художньо-творчого засвоєння</div>
<div class="t" style="left:42.0px;top:632.1px;font-size:3.00px;color:#3a5594;transform:scaleX(1.064);font-weight:bold">Мета роботи визначається основними задачами:</div>
<div class="t" style="left:42.0px;top:635.8px;font-size:3.00px;color:#3a5594;transform:scaleX(1.017);font-weight:bold">1. Розглянути історію класичного танцю.</div>
<div class="t" style="left:42.0px;top:639.6px;font-size:3.00px;color:#3a5594;transform:scaleX(1.018);font-weight:bold">2. Визначити основні елементи, що характеризують класичний танець.</div>
<div class="t" style="left:42.0px;top:643.6px;font-size:3.00px;color:#3a5594;transform:scaleX(1.022);font-weight:bold">3. Дослідити принципи використання класичного танцю у сучасному танці.</div>
<div class="t" style="left:42.0px;top:647.4px;font-size:3.00px;color:#3a5594;transform:scaleX(1.051);font-weight:bold">4. Проаналізувати вплив класичного танцю на розвиток сучасної хореографії.</div>
<div class="a" style="left:34px;top:697.5px;width:150px;height:85px;background:#fff;border-radius:4px;box-shadow:0 0 2px rgba(0,0,0,.25)"></div>
<div class="a" style="left:37px;top:700.5px;width:144px;height:78px;background:#f3f4f8"></div>
<div class="a" style="left:37px;top:701.5px;width:144px;height:25.5px;background:#d4482a"></div>
<div class="t" style="left:41.6px;top:718.8px;font-size:3.60px;color:#fbe3da;transform:scaleX(1.132)">Об'єкт та предмет дослідження</div>
<div class="t" style="left:41.6px;top:732.4px;font-size:3.00px;color:#3a5594;transform:scaleX(0.988);font-weight:bold">Об'єкт дослідження – класичний танець, як вагомий складовий сучасного танцю.</div>
<div class="t" style="left:41.6px;top:745.4px;font-size:3.00px;color:#3a5594;transform:scaleX(1.040);font-weight:bold">Предмет дослідження – особливості застосування та Філософський</div>
<div class="t" style="left:41.6px;top:749.1px;font-size:3.00px;color:#3a5594;transform:scaleX(1.090);font-weight:bold">аспект класичного в сучасному танці.</div>
<svg class="a" style="left:150px;top:765px" width="9" height="13" viewBox="0 0 9 13"><path d="M1 1 V11 L3.5 8.5 L5.5 12.5 L7 11.8 L5 8 H8.5Z" fill="#fff" stroke="#333" stroke-width="0.9"/></svg>
<div class="a" style="left:31px;top:799.5px;width:156px;height:89px;border:2.5px solid #7b1c24;border-radius:6px;background:#fff"></div>
<div class="a" style="left:37px;top:804.5px;width:144px;height:79px;background:#f3f4f8"></div>
<div class="a" style="left:37px;top:806px;width:144px;height:25px;background:#d4482a"></div>
<div class="t" style="left:41.5px;top:822.6px;font-size:5.70px;color:#fbe3da;transform:scaleX(0.8875)">Актуальність теми</div>
<div class="t" style="left:41.5px;top:836.8px;font-size:3.62px;color:#6680b8;transform:scaleX(0.97)">Актуальність теми. &nbsp;&nbsp; Класичний танець сьогодні залишається</div>
<div class="t" style="left:41.5px;top:843.5px;font-size:3.62px;color:#6680b8;transform:scaleX(0.97)">однією з найефективніших систем гармонійного розвитку опорно-</div>
<div class="t" style="left:41.5px;top:850.3px;font-size:3.62px;color:#6680b8;transform:scaleX(0.97)">рухового апарату танцівника. Потенціал цього танцю активно</div>
<div class="t" style="left:41.5px;top:857.1px;font-size:3.62px;color:#6680b8;transform:scaleX(0.97)">використовується в сучасних танцях, спорті та хореографічних</div>
<div class="t" style="left:41.5px;top:863.8px;font-size:3.62px;color:#6680b8;transform:scaleX(0.97)">школах.</div>
<div class="a" style="left:34px;top:906.5px;width:150px;height:85px;background:#fff;border-radius:4px;box-shadow:0 0 2px rgba(0,0,0,.25)"></div>
<div class="a" style="left:37px;top:909.5px;width:144px;height:78px;background:#f3f4f8"></div>
<div class="a" style="left:37px;top:910px;width:144px;height:25px;background:#d4482a"></div>
<div class="t" style="left:41.6px;top:927.0px;font-size:3.60px;color:#fbe3da;transform:scaleX(1.349)">Вступ</div>
<div class="t" style="left:77.0px;top:944.4px;font-size:3.00px;color:#4a64a0;transform:scaleX(1.208);font-weight:bold">Класичний танець — це система рухів,</div>
<div class="t" style="left:74.0px;top:948.4px;font-size:3.00px;color:#4a64a0;transform:scaleX(1.225)">сформована протягом століть, що поєднує</div>
<div class="t" style="left:74.0px;top:952.4px;font-size:3.00px;color:#4a64a0;transform:scaleX(1.267)">виразність, грацію та дисципліну. Він є</div>
<div class="t" style="left:76.0px;top:956.4px;font-size:3.00px;color:#4a64a0;transform:scaleX(1.232)">основою формування техніки танцівника</div>
<div class="t" style="left:78.0px;top:960.4px;font-size:3.00px;color:#4a64a0;transform:scaleX(1.208)">та забезпечує розвиток тіла, пластики</div>
<div class="t" style="left:76.0px;top:964.4px;font-size:3.00px;color:#4a64a0;transform:scaleX(1.437)">і музичності у будь-якому стилі</div>
<div class="t" style="left:86.0px;top:968.4px;font-size:3.00px;color:#4a64a0;transform:scaleX(1.139)">хореографічного мистецтва.</div>
<div class="a" style="left:34px;top:1010.5px;width:150px;height:23.5px;background:#fff;border-radius:4px 4px 0 0;box-shadow:0 0 2px rgba(0,0,0,.25);overflow:hidden">
<div class="a" style="left:3px;top:3px;width:144px;height:21px;background:#f3f4f8"></div>
</div>
<div class="t" style="left:42.0px;top:1017.4px;font-size:3.00px;color:#8a8a8a;transform:scaleX(1.290)">Історія</div>
<div class="a" style="left:42px;top:1023.5px;width:134px;height:0.8px;background:#d06040"></div>
<div class="t" style="left:42.0px;top:1027.3px;font-size:3.00px;color:#2a3550;transform:scaleX(0.866);font-weight:bold">Зародження, що класичний танець, сформований як основа хореографічного мистецтва</div>

<!-- MAIN SLIDE AREA -->
<div class="a" style="left:419px;top:455px;width:29px;height:29px;background:#fff;border-radius:5px;box-shadow:0 0 2px rgba(0,0,0,.2)"></div>
<svg class="a" style="left:424px;top:460px" width="19" height="19" viewBox="0 0 19 19"><path d="M2 17 L10 9" stroke="#333" stroke-width="1.3" stroke-dasharray="2 1.5"/><path d="M12 2 L13 6 L17 7 L13 8 L12 12 L11 8 L7 7 L11 6Z" fill="#333"/><path d="M5 3 L5.5 4.5 L7 5 L5.5 5.5 L5 7 L4.5 5.5 L3 5 L4.5 4.5Z" fill="#333"/></svg>
<div class="a" style="left:417px;top:492px;width:833px;height:469px;background:#fff;border:1px solid #d6d2d0"></div>
<div class="a" style="left:436px;top:510px;width:796px;height:141px;background:#d24726;border-bottom:1px solid #a93a26"></div>
<div class="a" style="left:436px;top:651px;width:796px;height:291px;background:#f5f5f8"></div>
<div class="t" style="left:461px;top:604.3px;font-size:31.5px;color:#fcebe6;transform:scaleX(.8875);transform-origin:0 0">Актуальність теми</div>
<style>
.sl{position:absolute;left:461px;white-space:nowrap;font-size:20px;line-height:1;color:#3a6cab;transform-origin:0 0}
.u{text-decoration:underline wavy #e66a6a;text-decoration-thickness:1px;text-underline-offset:2px}
</style>
<div class="sl" style="top:681px;transform:scaleX(.962)"><i>Актуальність теми.</i></div>
<div class="sl" style="top:681px;left:672px;transform:scaleX(.966)"><span class="u">Класичний</span> <span class="u">танець</span> <span class="u">сьогодні</span> <span class="u">залишається</span></div>
<div class="sl" style="top:718.3px;transform:scaleX(.99)"><span class="u">однією</span> з <span class="u">найефективніших</span> систем <span class="u">гармонійного</span> <span class="u">розвитку</span> опорно-</div>
<div class="sl" style="top:755.6px;transform:scaleX(.98)"><span class="u">рухового</span> <span class="u">апарату</span> <span class="u">танцівника</span>. <span class="u">Потенціал</span> <span class="u">цього</span> <span class="u">танцю</span> активно</div>
<div class="sl" style="top:793.5px;transform:scaleX(.963)"><span class="u">використовується</span> в <span class="u">сучасних</span> танцях, спорті та хореографічних</div>
<div class="sl" style="top:830.8px;transform:scaleX(.94)">школах.</div>
<!-- right scrollbar -->
<div class="a" style="left:1446px;top:450px;width:12px;height:498px;background:#f6f5f7;border-radius:6px"></div>
<svg class="a" style="left:1447px;top:451px" width="10" height="8" viewBox="0 0 10 8"><path d="M1 7 L5 1.5 L9 7Z" fill="#6a6a6a"/></svg>
<div class="a" style="left:1448px;top:621px;width:8px;height:51px;background:#6e6e6e;border-radius:4px"></div>
<svg class="a" style="left:1447px;top:935px" width="10" height="8" viewBox="0 0 10 8"><path d="M1 1 L5 6.5 L9 1Z" fill="#6a6a6a"/></svg>
<svg class="a" style="left:1446px;top:949px" width="12" height="14" viewBox="0 0 12 14" fill="#6a6a6a"><path d="M1 7 L6 1 L11 7Z M1 13 L6 7 L11 13Z"/></svg>
<svg class="a" style="left:1446px;top:964px" width="12" height="14" viewBox="0 0 12 14" fill="#6a6a6a"><path d="M1 1 L6 7 L11 1Z M1 7 L6 13 L11 7Z"/></svg>
<!-- notes -->
<div class="a" style="left:222px;top:999px;width:1238px;height:1px;background:#dcd6d4"></div>
<div class="t" style="left:232.5px;top:1008px;font-size:13.4px;color:#5f5f5f">Нотатки до слайда</div>
<!-- status bar -->
<div class="a" style="left:0;top:1034px;width:1460px;height:21px;background:#f5f4f4"></div>
<div class="t" style="left:11.5px;top:1040px;font-size:9.6px;color:#444">Слайд 4 з 9</div>
<svg class="a" style="left:81px;top:1037px" width="15" height="15" viewBox="0 0 15 15" fill="none" stroke="#555" stroke-width="1"><path d="M6 13 H1.5 V1.5 H10 V7"/><path d="M4 4.5 V10"/><path d="M8 9 L13 14 M13 9 L8 14"/></svg>
<div class="t" style="left:112.5px;top:1040px;font-size:9.8px;color:#444">російська</div>
<svg class="a" style="left:175px;top:1036px" width="16" height="16" viewBox="0 0 16 16" fill="none" stroke="#444" stroke-width="1.1"><circle cx="7" cy="2.5" r="1.6"/><path d="M1.5 5 L7 6.5 L12.5 5 M7 6.5 V10 L4 15 M7 10 L8.5 12.5"/><path d="M10 10 L15 15 M15 10 L10 15"/></svg>
<div class="t" style="left:193.7px;top:1040px;font-size:9.9px;font-weight:bold;color:#333">Спеціальні можливості: щось не так</div>
<svg class="a" style="left:1045px;top:1036px" width="18" height="17" viewBox="0 0 18 17" fill="none" stroke="#444" stroke-width="1.1"><path d="M6 4 L9 1.5 L12 4"/><path d="M1 8 H17 M1 11.5 H17 M1 15 H17"/></svg>
<div class="t" style="left:1063px;top:1039px;font-size:11px;color:#333">Нотатки</div>
<div class="a" style="left:1118px;top:1035px;width:38px;height:20px;background:#e3e1e0"></div>
<svg class="a" style="left:1129px;top:1037px" width="16" height="15" viewBox="0 0 16 15" fill="none" stroke="#444" stroke-width="1.1"><rect x="1.5" y="1.5" width="13" height="12"/><path d="M4.5 1.5 V13.5 M4.5 10 H14.5"/><rect x="7" y="3.5" width="5" height="4"/></svg>
<svg class="a" style="left:1168px;top:1038px" width="15" height="14" viewBox="0 0 15 14" fill="none" stroke="#444" stroke-width="1.1"><rect x="1" y="1" width="5" height="4.5"/><rect x="9" y="1" width="5" height="4.5"/><rect x="1" y="8.5" width="5" height="4.5"/><rect x="9" y="8.5" width="5" height="4.5"/></svg>
<svg class="a" style="left:1205px;top:1037px" width="15" height="15" viewBox="0 0 15 15" fill="none" stroke="#444" stroke-width="1.1"><path d="M1 2 H6 Q7.5 2 7.5 3.5 V13 Q7.5 12 6 12 H1Z M14 2 H9 Q7.5 2 7.5 3.5 V13 Q7.5 12 9 12 H14Z"/></svg>
<svg class="a" style="left:1243px;top:1037px" width="15" height="15" viewBox="0 0 15 15" fill="none" stroke="#444" stroke-width="1.1"><path d="M1 1.5 H14 M2 1.5 V8.5 H13 V1.5 M7.5 8.5 V13 M4.5 13.5 H10.5"/></svg>
<div class="a" style="left:1275px;top:1044.5px;width:7px;height:1px;background:#555"></div>
<div class="a" style="left:1287px;top:1045px;width:95px;height:1px;background:#777"></div>
<div class="a" style="left:1318.5px;top:1039px;width:3px;height:11px;background:#555"></div>
<div class="a" style="left:1334px;top:1043px;width:1px;height:4px;background:#888"></div>
<div class="a" style="left:1386.5px;top:1044.5px;width:8px;height:1px;background:#555"></div>
<div class="a" style="left:1390px;top:1041px;width:1px;height:8px;background:#555"></div>
<div class="t" style="left:1406px;top:1039px;font-size:10px;color:#444">69 %</div>
<svg class="a" style="left:1440px;top:1037px" width="15" height="15" viewBox="0 0 15 15" fill="none" stroke="#444" stroke-width="1"><rect x="4.5" y="4.5" width="6" height="6"/><path d="M7.5 0.5 L5.5 2.5 M7.5 0.5 L9.5 2.5 M7.5 14.5 L5.5 12.5 M7.5 14.5 L9.5 12.5 M0.5 7.5 L2.5 5.5 M0.5 7.5 L2.5 9.5 M14.5 7.5 L12.5 5.5 M14.5 7.5 L12.5 9.5"/></svg>
<!-- PARTICIPANTS PANEL -->
<div class="a" style="left:1469px;top:61px;width:446px;height:1083px;background:#fff;border-radius:9px"></div>
<div class="a" style="left:1474px;top:66px;width:436px;height:54.5px;background:#f0f3f6;border-radius:6px 6px 0 0"></div>
<div class="t" style="left:1605px;top:85px;font-size:16.2px;font-weight:bold;color:#1f1f29">Участники (5)</div>
<svg class="a" style="left:1843px;top:83px" width="20" height="20" viewBox="0 0 20 20" fill="none" stroke="#5f5f66" stroke-width="2"><path d="M8 2.5 H4 Q2 2.5 2 4.5 V16 Q2 18 4 18 H15.5 Q17.5 18 17.5 16 V12"/><path d="M11 2 H18 V9 M18 2 L9 11"/></svg>
<svg class="a" style="left:1879px;top:85px" width="16" height="16" viewBox="0 0 16 16" stroke="#5f5f66" stroke-width="1.5"><path d="M1.5 1.5 L14.5 14.5 M14.5 1.5 L1.5 14.5"/></svg>
<div class="a" style="left:1477px;top:174.5px;width:430px;height:203px;background:#fef4f2"></div>
<!-- avatars -->
<div class="a" style="left:1501px;top:131.5px;width:33.5px;height:34px;border-radius:8px;background:#8a56c9;color:#fff;font-size:22px;line-height:34px;text-align:center">K</div>
<div class="a" style="left:1501px;top:182.8px;width:33.5px;height:33.5px;border-radius:8px;background:#c8392f;color:#fff;font-size:15px;font-weight:bold;line-height:33.5px;text-align:center">Ю</div>
<div class="a" style="left:1501px;top:233.7px;width:33.5px;height:33.5px;border-radius:8px;background:#8f45b8;color:#fff;font-size:15px;font-weight:bold;line-height:33.5px;text-align:center">OK</div>
<div class="a" style="left:1501px;top:284.8px;width:33.5px;height:33.5px;border-radius:8px;background:#020202"></div>
<div class="a" style="left:1501px;top:335.6px;width:33.5px;height:33.5px;border-radius:8px;overflow:hidden;background:repeating-linear-gradient(180deg,#dfe2e6 0 2px,#cdd2d8 2px 3px)">
  <div class="a" style="left:0;top:25px;width:34px;height:9px;background:#1c6a62"></div>
  <div class="a" style="left:9px;top:6px;width:16px;height:30px;background:#f1eff5;border-radius:40% 40% 0 0"></div>
  <div class="a" style="left:14px;top:0;width:6px;height:7px;background:#b89a84;border-radius:40%"></div>
</div>
<!-- names -->
<div class="t" style="left:1549px;top:143px;font-size:14.9px;color:#242430">Кафедра хореог...</div>
<div class="t" style="left:1685px;top:143px;font-size:15.3px;color:#242430">(Организатор, я)</div>
<div class="t" style="left:1549px;top:194px;font-size:15.6px;color:#242430">Юлия Григорьева (Гость)</div>
<div class="t" style="left:1549px;top:245px;font-size:15.5px;color:#242430">Oleksii Korchyk (Гость)</div>
<div class="t" style="left:1549.4px;top:296px;font-size:15.1px;color:#242430">Анастасія Бабанська (Гость)</div>
<div class="t" style="left:1549.4px;top:347px;font-size:15.5px;color:#242430">Богдан Яременко -- (Гость)</div>
<!-- row icons -->
<svg class="a" style="left:1810px;top:140px" width="18" height="18" viewBox="0 0 18 18"><circle cx="9" cy="9" r="7" fill="none" stroke="#666" stroke-width="1.3"/><circle cx="9" cy="9" r="2.6" fill="#e0263a"/></svg>
<svg class="a" style="left:1841px;top:139px" width="16" height="21" viewBox="0 0 16 21" fill="none" stroke="#555" stroke-width="1.4"><rect x="5" y="1" width="6" height="11" rx="3"/><path d="M2 9 Q2 15 8 15 Q14 15 14 9 M8 15 V19.5 M5 19.5 H11"/></svg>
<svg class="a" style="left:1868px;top:141px" width="23" height="16" viewBox="0 0 23 16" fill="none" stroke="#555" stroke-width="1.4"><rect x="1" y="2" width="14" height="12" rx="2"/><path d="M15 6.5 L21.5 3 V13 L15 9.5"/></svg>
<div class="a" style="left:1809px;top:192.5px;width:20px;height:15px;background:#22a33f;border-radius:2px"></div>
<svg class="a" style="left:1813px;top:195px" width="12" height="10" viewBox="0 0 12 10" fill="none" stroke="#fff" stroke-width="1.5"><path d="M6 9 V2 M2.5 5 L6 1.5 L9.5 5"/></svg>
<svg class="a" style="left:1841px;top:190px" width="16" height="21" viewBox="0 0 16 21" fill="none" stroke="#555" stroke-width="1.4"><rect x="5" y="1" width="6" height="11" rx="3"/><path d="M2 9 Q2 15 8 15 Q14 15 14 9 M8 15 V19.5 M5 19.5 H11"/></svg>
<svg class="a" style="left:1868px;top:192px" width="23" height="16" viewBox="0 0 23 16" fill="none" stroke="#555" stroke-width="1.4"><rect x="1" y="2" width="14" height="12" rx="2"/><path d="M15 6.5 L21.5 3 V13 L15 9.5"/></svg>
<svg class="a" style="left:1868px;top:243px" width="23" height="16" viewBox="0 0 23 16" fill="none" stroke="#555" stroke-width="1.4"><rect x="1" y="2" width="14" height="12" rx="2"/><path d="M15 6.5 L21.5 3 V13 L15 9.5"/></svg>
<svg class="a" style="left:1838px;top:241px" width="22" height="22" viewBox="0 0 22 22" fill="none" stroke="#d63b3b" stroke-width="1.3"><rect x="8" y="2" width="6" height="11" rx="3"/><path d="M5 10 Q5 16 11 16 Q17 16 17 10 M11 16 V20.5 M8 20.5 H14"/><path d="M1.5 21 L20.5 2" stroke-width="1.5"/></svg>
<svg class="a" style="left:1838px;top:292px" width="22" height="22" viewBox="0 0 22 22" fill="none" stroke="#d63b3b" stroke-width="1.3"><rect x="8" y="2" width="6" height="11" rx="3"/><path d="M5 10 Q5 16 11 16 Q17 16 17 10 M11 16 V20.5 M8 20.5 H14"/><path d="M1.5 21 L20.5 2" stroke-width="1.5"/></svg>
<svg class="a" style="left:1838px;top:343px" width="22" height="22" viewBox="0 0 22 22" fill="none" stroke="#d63b3b" stroke-width="1.3"><rect x="8" y="2" width="6" height="11" rx="3"/><path d="M5 10 Q5 16 11 16 Q17 16 17 10 M11 16 V20.5 M8 20.5 H14"/><path d="M1.5 21 L20.5 2" stroke-width="1.5"/></svg>
<svg class="a" style="left:1868px;top:292px" width="23" height="21" viewBox="0 0 23 21" fill="none" stroke="#d63b3b" stroke-width="1.3"><rect x="1" y="5" width="14" height="12" rx="2"/><path d="M15 9.5 L21.5 6 V16 L15 12.5"/><path d="M1.5 20 L21.5 1" stroke-width="1.5"/></svg>
<svg class="a" style="left:1868px;top:343px" width="23" height="21" viewBox="0 0 23 21" fill="none" stroke="#d63b3b" stroke-width="1.3"><rect x="1" y="5" width="14" height="12" rx="2"/><path d="M15 9.5 L21.5 6 V16 L15 12.5"/><path d="M1.5 20 L21.5 1" stroke-width="1.5"/></svg>
<!-- bottom buttons -->
<div class="a" style="left:1496px;top:1092px;width:111px;height:29px;border:1px solid #b9b9bd;border-radius:8px"></div>
<div class="t" style="left:1510px;top:1099px;font-size:15.2px;color:#242430">Пригласить</div>
<div class="a" style="left:1629px;top:1092px;width:209px;height:29px;border:1px solid #b9b9bd;border-radius:8px"></div>
<div class="t" style="left:1643px;top:1099px;font-size:15.4px;color:#242430">Выключить звук для всех</div>
<div class="a" style="left:1860px;top:1092px;width:29px;height:29px;border:1px solid #b9b9bd;border-radius:8px"></div>
<div class="a" style="left:1868px;top:1105px;width:2.5px;height:2.5px;background:#222;border-radius:50%"></div>
<div class="a" style="left:1873.5px;top:1105px;width:2.5px;height:2.5px;background:#222;border-radius:50%"></div>
<div class="a" style="left:1879px;top:1105px;width:2.5px;height:2.5px;background:#222;border-radius:50%"></div>
<!-- TASKBAR -->
<div class="a" style="left:0;top:1150px;width:1920px;height:50px;background:linear-gradient(90deg,#1e3440 0,#233843 35%,#1f3346 65%,#1b2b47 100%)"></div>
<svg class="a" style="left:20px;top:1164.5px" width="21" height="21" viewBox="0 0 21 21" fill="#fff"><path d="M0 3 L8.5 1.8 V10 H0Z M9.5 1.6 L21 0 V10 H9.5Z M0 11 H8.5 V19.2 L0 18Z M9.5 11 H21 V21 L9.5 19.4Z"/></svg>
<div class="a" style="left:60px;top:1150px;width:360px;height:50px;background:#f0f0f0;border:1px solid #d8d8d8;border-bottom:none"></div>
<svg class="a" style="left:74px;top:1164px" width="22" height="22" viewBox="0 0 22 22" fill="none" stroke="#222" stroke-width="1.6"><circle cx="13" cy="8.5" r="6.5"/><path d="M8.2 13.3 L1.5 20"/></svg>
<div class="t" style="left:110px;top:1166px;font-size:19px;color:#1f1f1f">Пошук</div>
<svg class="a" style="left:328px;top:1158px" width="84" height="34" viewBox="0 0 84 34"><defs><linearGradient id="st" x1="0" y1="0" x2="0" y2="1"><stop offset="0" stop-color="#ffd94a"/><stop offset="1" stop-color="#f4a916"/></linearGradient></defs><path d="M32 2 Q34 13 45 16 Q34 19 32 30 Q30 19 19 16 Q30 13 32 2Z" fill="url(#st)"/><path d="M60.5 9 Q61.5 15.5 67 16.5 Q61.5 17.5 60.5 24 Q59.5 17.5 54 16.5 Q59.5 15.5 60.5 9Z" fill="url(#st)"/><path d="M8 19 Q8.7 23.5 13 24.5 Q8.7 25.5 8 30 Q7.3 25.5 3 24.5 Q7.3 23.5 8 19Z" fill="#1aa0e8"/><circle cx="52.5" cy="4.5" r="2.4" fill="#e8603a"/><circle cx="75" cy="28.5" r="2.4" fill="#7cc040"/></svg>
<svg class="a" style="left:439px;top:1164px" width="22" height="21" viewBox="0 0 22 21" fill="none" stroke="#fff" stroke-width="1.4"><path d="M1 1.5 H15 M1 19.5 H15 M3 4.5 H13 V16.5 H3Z M1 4.5 H3 M13 4.5 H15 M1 16.5 H3 M13 16.5 H15 M20 1 V7 M20 13 V20"/><rect x="18.5" y="8" width="3" height="4" fill="#fff" stroke="none"/></svg>
<svg class="a" style="left:498px;top:1159px" width="31" height="31" viewBox="0 0 31 31"><defs><linearGradient id="e1" x1="0" y1="0" x2="1" y2="1"><stop offset="0" stop-color="#36c0e0"/><stop offset=".6" stop-color="#2e8ad8"/><stop offset="1" stop-color="#1c5fb0"/></linearGradient><linearGradient id="e2" x1="0" y1="0" x2="1" y2="0"><stop offset="0" stop-color="#2fb0e8"/><stop offset="1" stop-color="#66d85a"/></linearGradient></defs><circle cx="15.5" cy="15.5" r="15" fill="url(#e1)"/><path d="M3 12 Q8 3 18 3 Q29 4 30.5 15 Q30 20 25 20 H14 Q13 14 19 13 Q14 8 8 10 Q4 12 3 12Z" fill="url(#e2)"/><path d="M12 22 Q12 28 20 29 Q12 31 6 25 Q2 20 4 14 Q6 20 12 22Z" fill="#1a4fa0"/></svg>
<svg class="a" style="left:561px;top:1162px" width="29" height="25" viewBox="0 0 29 25"><path d="M1 2 Q1 0.5 2.5 0.5 H10 L12.5 3 H27 Q28.5 3 28.5 4.5 V23 Q28.5 24.5 27 24.5 H2.5 Q1 24.5 1 23Z" fill="#f5c64a"/><path d="M1 5 H28.5 V23 Q28.5 24.5 27 24.5 H2.5 Q1 24.5 1 23Z" fill="#ffd860"/><path d="M6 24.5 V13.5 H23 V24.5 H19.5 V17 H9.5 V24.5Z" fill="#3a8ad8"/><rect x="10" y="18" width="9" height="6.5" fill="#f5b23c"/></svg>
<svg class="a" style="left:623px;top:1159px" width="30" height="31" viewBox="0 0 30 31"><defs><linearGradient id="op" x1="0" y1="0" x2="0" y2="1"><stop offset="0" stop-color="#ff2a3a"/><stop offset="1" stop-color="#c0101c"/></linearGradient></defs><ellipse cx="15" cy="15.5" rx="14.5" ry="15" fill="url(#op)"/><ellipse cx="15" cy="15.5" rx="6" ry="11.5" fill="#1f3440"/></svg>
<div class="a" style="left:670px;top:1150px;width:56px;height:50px;background:#3c4a56"></div>
<div class="a" style="left:726px;top:1150px;width:5px;height:50px;background:#33414d"></div>
<div class="a" style="left:670px;top:1197px;width:61px;height:3px;background:#76b7ea"></div>
<div class="a" style="left:685px;top:1159.5px;width:30px;height:30px;border-radius:50%;background:radial-gradient(circle at 50% 35%,#3a86ff,#0a55e6)"></div>
<div class="t" style="left:689.5px;top:1170px;font-size:8.5px;font-weight:bold;color:#fff;letter-spacing:-0.3px">zoom</div>
<!-- tray -->
<svg class="a" style="left:1518px;top:1168px" width="20" height="13" viewBox="0 0 20 13" fill="none" stroke="#fff" stroke-width="1.4"><path d="M2 11 L10 3 L18 11"/></svg>
<svg class="a" style="left:1550px;top:1165px" width="18" height="20" viewBox="0 0 18 20" fill="none" stroke="#fff" stroke-width="1.2"><rect x="1.5" y="6" width="10" height="8" rx="1.5"/><path d="M11.5 8.5 L16.5 6 V14 L11.5 11.5"/><path d="M4 3 Q9 0.5 14 3 M4 17 Q9 19.5 14 17"/></svg>
<svg class="a" style="left:1580px;top:1164px" width="15" height="22" viewBox="0 0 15 22" fill="#fff"><rect x="3.5" y="0.5" width="8" height="14" rx="4"/><path d="M1 10 Q1 17 7.5 17 Q14 17 14 10" fill="none" stroke="#fff" stroke-width="1.3"/><path d="M7.5 17 V21 M4 21 H11" stroke="#fff" stroke-width="1.3"/></svg>
<svg class="a" style="left:1607px;top:1164px" width="23" height="22" viewBox="0 0 23 22" fill="none" stroke="#fff" stroke-width="1.3"><path d="M1.5 4 L21 1.5 V16 L1.5 19Z"/><path d="M8 10 Q8 7 12 7 M10.5 5.5 L12 7 L10.5 8.5 M14 10 Q14 13 10 13 M11.5 14.5 L10 13 L11.5 11.5"/><circle cx="16.6" cy="16.4" r="4.2" fill="#e81123" stroke="none"/></svg>
<svg class="a" style="left:1637px;top:1170px" width="22" height="13" viewBox="0 0 22 13" fill="none" stroke="#fff" stroke-width="1.2"><path d="M1 3 H4 M1 6 H4 M4 1.5 V7.5 M4 4.5 H6"/><rect x="6" y="3" width="14" height="9" rx="1"/><rect x="8" y="5" width="6" height="5" fill="#fff" stroke="none"/><path d="M21 6 V9" stroke-width="1.6"/></svg>
<svg class="a" style="left:1669px;top:1166px" width="19" height="19" viewBox="0 0 19 19" fill="none" stroke="#fff" stroke-width="1.2"><path d="M2 17 Q2 2 17 2 M5.5 17 Q5.5 5.5 17 5.5 M9 17 Q9 9 17 9" stroke-dasharray="2.2 1.2"/><circle cx="16" cy="16" r="1.8" fill="#fff" stroke="none"/></svg>
<svg class="a" style="left:1697px;top:1165px" width="23" height="20" viewBox="0 0 23 20" fill="none" stroke="#fff" stroke-width="1.3"><path d="M1.5 7 H5 L10 2.5 V17.5 L5 13 H1.5Z"/><path d="M13 7.5 Q14.5 10 13 12.5 M15.5 5 Q18.5 10 15.5 15 M18 2 Q23 10 18 18"/></svg>
<div class="t" style="left:1732px;top:1169px;font-size:13.6px;color:#fff">УКР</div>
<div class="t" style="left:1794px;top:1157px;font-size:13.6px;color:#fff">10:18</div>
<div class="t" style="left:1776px;top:1180px;font-size:13.8px;color:#fff">22.12.2025</div>
<svg class="a" style="left:1868px;top:1164px" width="24" height="22" viewBox="0 0 24 22"><path d="M1 1 H21 V15 H8 L4 19 V15 H1Z" fill="#fff"/><path d="M5 5 H17 M5 8 H17 M5 11 H13" stroke="#1b2b47" stroke-width="1.1"/></svg>
<div class="a" style="left:1879px;top:1175.5px;width:18px;height:18px;border-radius:50%;background:#30333a;border:1.5px solid #6a6e76;color:#fff;font-size:12px;font-weight:bold;line-height:15px;text-align:center">1</div>
<div class="a" style="left:1914px;top:1150px;width:1px;height:50px;background:#5a6680"></div>
</body></html>
